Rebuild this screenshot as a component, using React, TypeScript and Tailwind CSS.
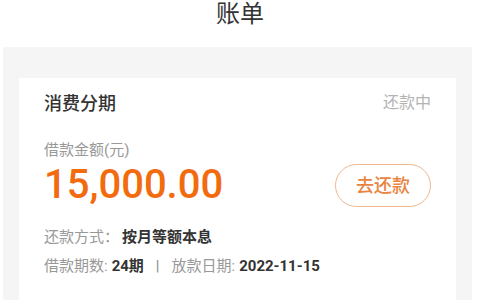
export default function App() {
  const font = { fontFamily: "Roboto, 'Noto Sans CJK SC', sans-serif" };
  return (
    <div className="w-[480px] h-[300px] overflow-hidden bg-white" style={font}>
      <div className="h-[47px] flex items-start justify-center">
        <div className="text-[24px] leading-[28px] text-[#333333]">账单</div>
      </div>
      <div className="mx-[3px] w-[469px] h-[253px] bg-[#f5f5f5] pt-[31px] px-[16px]">
        <div className="bg-white h-[222px] px-[25px] pt-[12px]">
          <div className="flex items-center justify-between h-[26px]">
            <div className="text-[18px] font-medium text-[#333333]">消费分期</div>
            <div className="text-[16px] text-[#b3b3b3]">还款中</div>
          </div>
          <div className="mt-[24px] text-[15px] leading-[20px] text-[#999999]">借款金额(元)</div>
          <div className="flex items-center justify-between mt-[1px]">
            <div className="text-[40px] leading-[48px] font-medium text-[#f26b0f]">15,000.00</div>
            <button className="w-[96px] h-[43px] rounded-full border border-[#eeb78f] text-[18px] font-medium text-[#e9843f] flex items-center justify-center">
              去还款
            </button>
          </div>
          <div className="mt-[18px] flex items-center text-[15px] leading-[21px]">
            <span className="text-[#999999]">还款方式：</span>
            <span className="ml-[3px] font-bold text-[#333333]">按月等额本息</span>
          </div>
          <div className="mt-[8px] flex items-center text-[15px] leading-[21px]">
            <span className="text-[#999999]">借款期数:</span>
            <span className="ml-[4px] font-bold text-[#333333]">24期</span>
            <span className="mx-[12px] text-[#888888]">|</span>
            <span className="text-[#999999]">放款日期:</span>
            <span className="ml-[4px] font-bold text-[#333333]">2022-11-15</span>
          </div>
        </div>
      </div>
    </div>
  );
}
